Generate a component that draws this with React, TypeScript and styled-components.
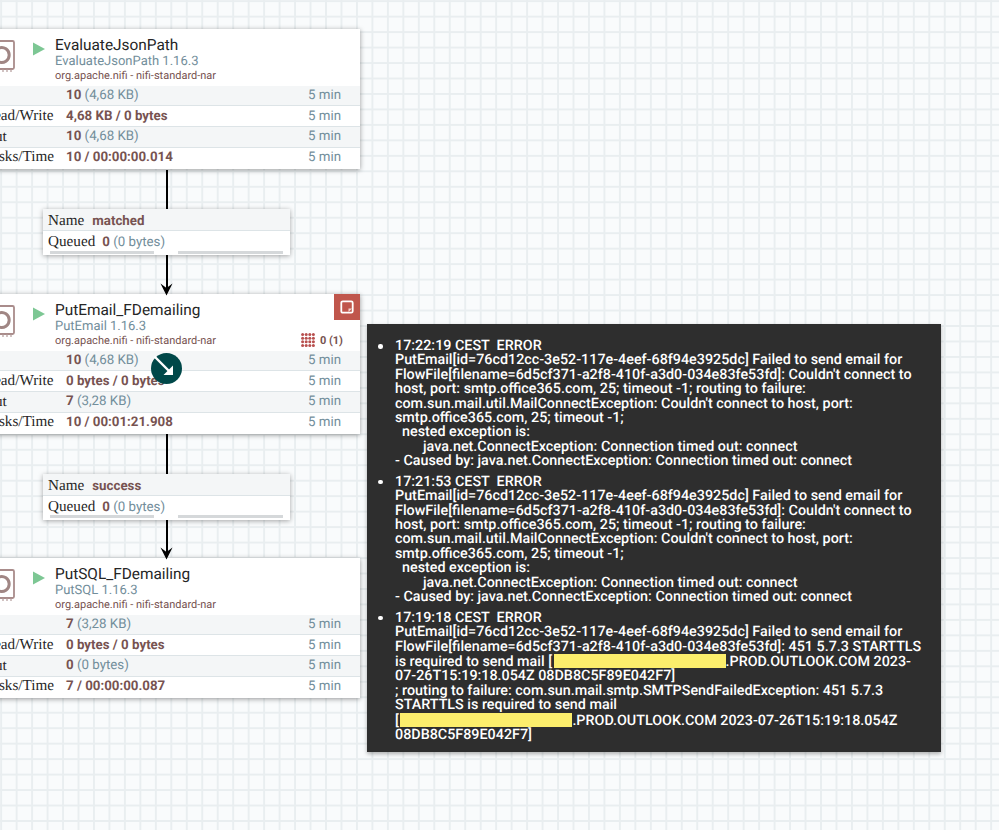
import React from "react";
import styled, { createGlobalStyle } from "styled-components";

const Global = createGlobalStyle`
  html, body { margin: 0; padding: 0; background: #f9fbfc; }
  #root { width: 999px; height: 830px; }
`;

const Canvas = styled.div`
  position: relative;
  width: 999px;
  height: 830px;
  overflow: hidden;
  background-color: #f9fbfc;
  background-image:
    linear-gradient(to right, #e9eef0 1.5px, transparent 1.5px),
    linear-gradient(to bottom, #e9eef0 1.5px, transparent 1.5px);
  background-size: 15.47px 15.47px;
  background-position: 0.2px 0.2px;
  font-family: Roboto, "Liberation Sans", sans-serif;
  text-rendering: geometricPrecision;
`;

const Card = styled.div<{ $top: number }>`
  position: absolute;
  left: -40px;
  top: ${(p) => p.$top}px;
  width: 400px;
  background: #ffffff;
  box-shadow: 0 1px 5px rgba(0, 0, 0, 0.4);
`;

const CardHead = styled.div`
  position: relative;
  height: 56.5px;
  display: flex;
  align-items: flex-start;
`;

const ChipIcon = styled.svg`
  position: absolute;
  left: 32px;
  top: 11px;
`;

const RunIcon = styled.svg`
  margin: 13px 0 0 72px;
  flex: none;
`;

const Titles = styled.div`
  margin: 7px 0 0 10px;
  display: flex;
  flex-direction: column;
`;

const Title = styled.div`
  font-size: 15.4px;
  line-height: 18px;
  color: #262626;
  white-space: nowrap;
`;

const Type = styled.div`
  font-size: 13px;
  line-height: 15px;
  color: #728e9b;
  white-space: nowrap;
`;

const Bundle = styled.div`
  font-size: 11px;
  line-height: 14px;
  color: #775351;
  white-space: nowrap;
`;

const Rows = styled.div`
  display: flex;
  flex-direction: column;
  padding-bottom: 1px;
`;

const Row = styled.div<{ $shade: boolean }>`
  height: 19.7px;
  margin-bottom: 1px;
  display: grid;
  grid-template-columns: 106px 1fr auto;
  align-items: center;
  padding-right: 19px;
  background: ${(p) => (p.$shade ? "#f4f6f7" : "#ffffff")};
  box-shadow: 0 1px 0 #dde4e7;
  white-space: nowrap;
  &:last-child {
    box-shadow: none;
  }
`;

const Label = styled.div`
  font-family: "Liberation Serif", serif;
  font-size: 15.2px;
  color: #262626;
  padding-left: 24px;
`;

const Val = styled.div`
  font-size: 13.3px;
  color: #775351;
  font-weight: 700;
  white-space: nowrap;
`;

const Soft = styled.span`
  font-weight: 400;
  color: #728e9b;
`;

const Age = styled.div`
  font-size: 13.3px;
  color: #728e9b;
`;

const NoteCorner = styled.div`
  position: absolute;
  right: 0;
  top: 0;
  width: 26px;
  height: 26px;
  background: #c0564c;
  display: flex;
  align-items: center;
  justify-content: center;
`;

const Threads = styled.div`
  position: absolute;
  right: 17px;
  top: 39px;
  display: flex;
  align-items: center;
  gap: 5px;
  font-size: 11px;
  font-weight: 700;
  color: #775351;
`;

const Badge = styled.div`
  position: absolute;
  left: 150.5px;
  top: 352.5px;
  width: 31px;
  height: 31px;
  border-radius: 50%;
  background: #004849;
`;

const BadgeArrow = styled.svg`
  position: absolute;
  left: 2px;
  top: 2px;
`;

const Wire = styled.div<{ $top: number; $height: number }>`
  position: absolute;
  left: 165.5px;
  top: ${(p) => p.$top}px;
  width: 2px;
  height: ${(p) => p.$height}px;
  background: #000;
`;

const Arrow = styled.svg<{ $top: number }>`
  position: absolute;
  left: 160px;
  top: ${(p) => p.$top}px;
`;

const Conn = styled.div<{ $top: number }>`
  position: absolute;
  left: 43px;
  top: ${(p) => p.$top}px;
  width: 247px;
  height: 46px;
  background: #fff;
  box-shadow: 0 1px 5px rgba(0, 0, 0, 0.35);
  display: flex;
  flex-direction: column;
`;

const ConnHead = styled.div`
  height: 18px;
  padding: 3px 0 0 5px;
  background: #f4f6f7;
  border-bottom: 1px solid #dde4e7;
  display: flex;
  align-items: baseline;
  gap: 8px;
`;

const ConnBody = styled.div`
  position: relative;
  height: 22px;
  padding: 2px 0 0 5px;
  display: flex;
  align-items: baseline;
  gap: 7px;
`;

const ConnLabel = styled.span`
  font-family: "Liberation Serif", serif;
  font-size: 15.2px;
  color: #262626;
`;

const Bars = styled.div`
  position: absolute;
  left: 7px;
  right: 7px;
  bottom: 1.5px;
  display: grid;
  grid-template-columns: 104px 105px;
  justify-content: space-between;
`;

const Bar = styled.div`
  height: 3px;
  background: #d5d8da;
`;

const Tip = styled.div`
  position: absolute;
  left: 367px;
  top: 324px;
  width: 574px;
  height: 428px;
  box-sizing: border-box;
  background: #2e2e2e;
  box-shadow: 0 2px 4px rgba(0, 0, 0, 0.3);
  padding: 15px 24px 0 28px;
  color: #fff;
  font-size: 14.33px;
  font-weight: 500;
  line-height: 14.4px;
`;

const List = styled.ul`
  margin: 0;
  padding: 0;
  list-style: none;
  display: flex;
  flex-direction: column;
  gap: 6.2px;
`;

const Item = styled.li`
  position: relative;
  &::before {
    content: "";
    position: absolute;
    left: -17px;
    top: 5px;
    width: 4.5px;
    height: 4.5px;
    border-radius: 50%;
    background: #fff;
  }
`;

const Line = styled.div<{ $indent?: number }>`
  white-space: pre;
  padding-left: ${(p) => p.$indent ?? 0}px;
`;

const Mark = styled.span<{ $w: number }>`
  display: inline-block;
  width: ${(p) => p.$w}px;
  height: 14px;
  margin-left: 1.5px;
  vertical-align: -2px;
  background: #fcee6c;
`;

type RowData = [string, string, string];

const Node = ({ top, title, type, rows, alert }: { top: number; title: string; type: string; rows: RowData[]; alert?: boolean }) => (
  <Card $top={top}>
    <CardHead>
      <ChipIcon width="24" height="34" viewBox="0 0 24 34" fill="none">
        <rect x="1" y="1" width="21" height="28" rx="1.5" stroke="#a98c8b" strokeWidth="1.8" />
        <path d="M7 8a7.5 7.5 0 1 1 0 14" stroke="#a08684" strokeWidth="3" />
        <path d="M7 29.5v2.5M11 29.5v2.5M15 29.5v2.5M19 29.5v2.5" stroke="#b9a3a2" strokeWidth="1.3" />
      </ChipIcon>
      <RunIcon width="13" height="14" viewBox="0 0 13 14">
        <path d="M1 0.5l12 6.5-12 6.5z" fill="#7dc794" />
      </RunIcon>
      <Titles>
        <Title>{title}</Title>
        <Type>{type}</Type>
        <Bundle>org.apache.nifi - nifi-standard-nar</Bundle>
      </Titles>
      {alert && (
        <>
          <NoteCorner>
            <svg width="14" height="14" viewBox="0 0 14 14" fill="none">
              <rect x="1.3" y="1.3" width="11.4" height="11.4" rx="1.5" stroke="#fff" strokeWidth="1.8" />
              <path d="M12 8.5h-3.5v3.5z" fill="#f3d6d2" />
            </svg>
          </NoteCorner>
          <Threads>
            <svg width="14" height="14" viewBox="0 0 14 14" fill="#b8504f">
              {[0, 3.6, 7.2, 10.8].flatMap((x) =>
                [0, 3.6, 7.2, 10.8].map((y) => <circle key={`${x}-${y}`} cx={x + 1.6} cy={y + 1.6} r="1.5" />)
              )}
            </svg>
            <span>0 (1)</span>
          </Threads>
        </>
      )}
    </CardHead>
    <Rows>
      {rows.map(([label, bold, soft], i) => (
        <Row key={label} $shade={i % 2 === 0}>
          <Label>{label}</Label>
          <Val>
            {bold} {soft && <Soft>{soft}</Soft>}
          </Val>
          <Age>5 min</Age>
        </Row>
      ))}
    </Rows>
  </Card>
);

const Connection = ({ top, name }: { top: number; name: string }) => (
  <Conn $top={top}>
    <ConnHead>
      <ConnLabel>Name</ConnLabel>
      <Val>{name}</Val>
    </ConnHead>
    <ConnBody>
      <ConnLabel>Queued</ConnLabel>
      <Val>
        0 <Soft>(0 bytes)</Soft>
      </Val>
      <Bars>
        <Bar />
        <Bar />
      </Bars>
    </ConnBody>
  </Conn>
);

const ArrowHead = ({ top }: { top: number }) => (
  <Arrow $top={top} width="13" height="13" viewBox="0 0 13 13">
    <path d="M0.5 0.5l6 4.5 6-4.5-6 12z" fill="#000" />
  </Arrow>
);

export default function App() {
  return (
    <Canvas>
      <Global />
      <Wire $top={170} $height={120} />
      <Wire $top={434} $height={120} />
      <Node
        top={29}
        title="EvaluateJsonPath"
        type="EvaluateJsonPath 1.16.3"
        rows={[
          ["In", "10", "(4,68 KB)"],
          ["Read/Write", "4,68 KB / 0 bytes", ""],
          ["Out", "10", "(4,68 KB)"],
          ["Tasks/Time", "10 / 00:00:00.014", ""],
        ]}
      />
      <Connection top={209} name="matched" />
      <Node
        top={294}
        alert
        title="PutEmail_FDemailing"
        type="PutEmail 1.16.3"
        rows={[
          ["In", "10", "(4,68 KB)"],
          ["Read/Write", "0 bytes / 0 bytes", ""],
          ["Out", "7", "(3,28 KB)"],
          ["Tasks/Time", "10 / 00:01:21.908", ""],
        ]}
      />
      <Badge>
        <BadgeArrow width="27" height="27" viewBox="0 0 27 27" fill="none">
          <path d="M1.5 1.5l16 16" stroke="#fff" strokeWidth="2.4" />
          <path d="M20 10.5v9.5h-9.5z" fill="#fff" />
        </BadgeArrow>
      </Badge>
      <Connection top={473.5} name="success" />
      <Node
        top={558}
        title="PutSQL_FDemailing"
        type="PutSQL 1.16.3"
        rows={[
          ["In", "7", "(3,28 KB)"],
          ["Read/Write", "0 bytes / 0 bytes", ""],
          ["Out", "0", "(0 bytes)"],
          ["Tasks/Time", "7 / 00:00:00.087", ""],
        ]}
      />
      <ArrowHead top={283} />
      <ArrowHead top={547} />
      <Tip>
        <List>
          <Item>
            <Line>17:22:19 CEST  ERROR</Line>
            <Line>PutEmail[id=76cd12cc-3e52-117e-4eef-68f94e3925dc] Failed to send email for</Line>
            <Line>FlowFile[filename=6d5cf371-a2f8-410f-a3d0-034e83fe53fd]: Couldn't connect to</Line>
            <Line>host, port: smtp.office365.com, 25; timeout -1; routing to failure:</Line>
            <Line>com.sun.mail.util.MailConnectException: Couldn't connect to host, port:</Line>
            <Line>smtp.office365.com, 25; timeout -1;</Line>
            <Line $indent={7}>nested exception is:</Line>
            <Line $indent={28}>java.net.ConnectException: Connection timed out: connect</Line>
            <Line>- Caused by: java.net.ConnectException: Connection timed out: connect</Line>
          </Item>
          <Item>
            <Line>17:21:53 CEST  ERROR</Line>
            <Line>PutEmail[id=76cd12cc-3e52-117e-4eef-68f94e3925dc] Failed to send email for</Line>
            <Line>FlowFile[filename=6d5cf371-a2f8-410f-a3d0-034e83fe53fd]: Couldn't connect to</Line>
            <Line>host, port: smtp.office365.com, 25; timeout -1; routing to failure:</Line>
            <Line>com.sun.mail.util.MailConnectException: Couldn't connect to host, port:</Line>
            <Line>smtp.office365.com, 25; timeout -1;</Line>
            <Line $indent={7}>nested exception is:</Line>
            <Line $indent={28}>java.net.ConnectException: Connection timed out: connect</Line>
            <Line>- Caused by: java.net.ConnectException: Connection timed out: connect</Line>
          </Item>
          <Item>
            <Line>17:19:18 CEST  ERROR</Line>
            <Line>PutEmail[id=76cd12cc-3e52-117e-4eef-68f94e3925dc] Failed to send email for</Line>
            <Line>FlowFile[filename=6d5cf371-a2f8-410f-a3d0-034e83fe53fd]: 451 5.7.3 STARTTLS</Line>
            <Line>is required to send mail [<Mark $w={172} />.PROD.OUTLOOK.COM 2023-</Line>
            <Line>07-26T15:19:18.054Z 08DB8C5F89E042F7]</Line>
            <Line>; routing to failure: com.sun.mail.smtp.SMTPSendFailedException: 451 5.7.3</Line>
            <Line>STARTTLS is required to send mail</Line>
            <Line>[<Mark $w={172} />.PROD.OUTLOOK.COM 2023-07-26T15:19:18.054Z</Line>
            <Line>08DB8C5F89E042F7]</Line>
          </Item>
        </List>
      </Tip>
    </Canvas>
  );
}
